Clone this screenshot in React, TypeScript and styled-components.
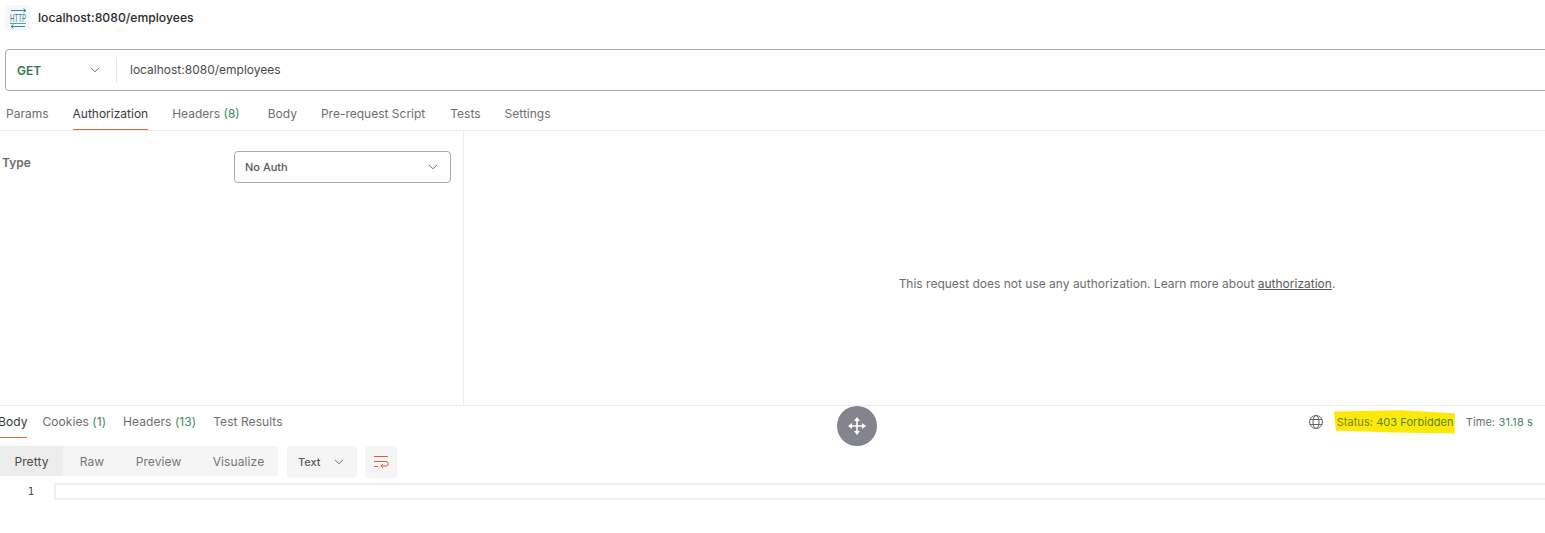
import React from "react";
import styled, { createGlobalStyle } from "styled-components";

const Global = createGlobalStyle`
  html, body { margin: 0; padding: 0; background: #fff; overflow: hidden; }
  body { font-family: Inter, "Liberation Sans", sans-serif; }
`;

const Page = styled.div`
  position: relative;
  width: 1545px;
  height: 533px;
  overflow: hidden;
  background: #fff;
  color: #6b6b6b;
  font-size: 12px;
`;

const TitleBar = styled.header`
  display: flex;
  align-items: center;
  gap: 8px;
  height: 36px;
  padding-left: 5px;
  box-sizing: border-box;
`;

const IconTile = styled.div`
  width: 25px;
  height: 26px;
  border-radius: 4px;
  background: #f5f7f8;
  display: flex;
  align-items: center;
  justify-content: center;
`;

const RequestName = styled.span`
  padding-bottom: 2px;
  font-size: 12.2px;
  font-weight: 500;
  color: #2b2b2b;
`;

const UrlBar = styled.div`
  display: flex;
  align-items: center;
  height: 42px;
  box-sizing: border-box;
  margin: 13px -20px 0 5px;
  border: 1px solid #a8a8a8;
  border-radius: 4px;
`;

const MethodSelect = styled.div`
  display: flex;
  align-items: center;
  justify-content: space-between;
  width: 111px;
  height: 26px;
  box-sizing: border-box;
  padding: 0 16px 0 11px;
  border-right: 1px solid #e6e6e6;
  font-size: 12px;
  font-weight: 600;
  color: #2f7a4f;
`;

const UrlText = styled.span`
  margin-left: 13px;
  padding-bottom: 2px;
  font-size: 12px;
  color: #4a4a4a;
`;

const Tabs = styled.nav<{ $gap: number; $left: number; $height: number }>`
  display: flex;
  align-items: stretch;
  gap: ${(p) => p.$gap}px;
  height: ${(p) => p.$height}px;
  padding-left: ${(p) => p.$left}px;
`;

const RequestTabs = styled(Tabs)`
  margin-top: 6px;
  border-bottom: 1px solid #ededed;
`;

const Tab = styled.span<{ $active?: boolean; $lead?: number; $response?: boolean }>`
  display: flex;
  align-items: center;
  height: 100%;
  box-sizing: border-box;
  margin-left: ${(p) => p.$lead ?? 0}px;
  padding-bottom: ${(p) => (p.$response ? 2 : 0)}px;
  font-size: 12px;
  letter-spacing: ${(p) => (p.$response ? 0.06 : 0)}px;
  white-space: pre;
  color: ${(p) => (p.$active ? "#3a3a3a" : "#6e6e6e")};
  box-shadow: ${(p) => (p.$active ? "inset 0 -1px 0 #e0673a" : "none")};
`;

const Count = styled.span`
  color: #3f8a5f;
`;

const AuthPane = styled.section`
  display: flex;
  height: 274px;
  border-bottom: 1px solid #ededed;
`;

const AuthSide = styled.div`
  display: flex;
  justify-content: space-between;
  align-items: flex-start;
  width: 464px;
  box-sizing: border-box;
  padding: 20px 12px 0 2px;
  border-right: 1px solid #ededed;
`;

const FieldLabel = styled.span`
  font-size: 12px;
  font-weight: 600;
  color: #6e6e6e;
  margin-top: 4px;
`;

const AuthSelect = styled.div`
  display: flex;
  align-items: center;
  justify-content: space-between;
  width: 217px;
  height: 32px;
  box-sizing: border-box;
  padding: 0 12px 0 10px;
  border: 1px solid #a8a8a8;
  border-radius: 4px;
  font-size: 11px;
  font-weight: 500;
  color: #5a5a5a;
`;

const AuthInfo = styled.div`
  flex: 1;
  display: flex;
  align-items: center;
  justify-content: center;
  padding: 30px 0 0 225px;
  font-size: 12px;
  color: #6e6e6e;
`;

const DocLink = styled.span`
  text-decoration: underline;
  color: #5a5a5a;
`;

const ResponseHeader = styled.div`
  display: flex;
  align-items: stretch;
  justify-content: space-between;
  height: 32px;
`;

const ResponseMeta = styled.div`
  display: flex;
  align-items: center;
  padding: 0 12px 1px 0;
  font-size: 11px;
  color: #6e6e6e;
`;

const Globe = styled.span`
  display: flex;
  margin-right: 10px;
  color: #666;
`;

const Status = styled.span`
  display: flex;
  align-items: center;
  width: 121px;
  height: 24px;
  margin-right: 11px;
  padding-left: 3px;
  box-sizing: border-box;
  white-space: pre;
  background: #fce80a;
  color: #7d8512;
  letter-spacing: 0.05px;
  clip-path: polygon(0 8%, 55% 3%, 100% 16%, 100% 100%, 50% 96%, 2% 88%);
`;

const StatusValue = styled.span`
  color: #55881c;
`;

const Time = styled.span`
  letter-spacing: 0.12px;
  white-space: pre;
`;

const TimeValue = styled.span`
  color: #3f8a5f;
`;

const ResponseToolbar = styled.div`
  display: flex;
  align-items: flex-start;
  margin-top: 8px;
`;

const ViewGroup = styled.div`
  display: flex;
  align-items: center;
  width: 278px;
  height: 30px;
  background: #f5f5f5;
  border-radius: 0 4px 4px 0;
`;

const ViewOption = styled.span<{ $active?: boolean; $width: number }>`
  display: flex;
  flex-shrink: 0;
  align-items: center;
  justify-content: center;
  width: ${(p) => p.$width}px;
  height: 100%;
  font-size: 12px;
  letter-spacing: 0.1px;
  color: ${(p) => (p.$active ? "#4a4a4a" : "#757575")};
  background: ${(p) => (p.$active ? "#ededed" : "transparent")};
`;

const FormatSelect = styled.div`
  display: flex;
  align-items: center;
  justify-content: space-between;
  width: 70px;
  height: 32px;
  box-sizing: border-box;
  margin-left: 9px;
  padding: 0 13px 0 11px;
  background: #f5f5f5;
  border-radius: 4px;
  font-size: 11px;
  font-weight: 500;
  color: #5a5a5a;
`;

const WrapButton = styled.div`
  display: flex;
  align-items: center;
  justify-content: center;
  width: 32px;
  height: 32px;
  margin-left: 8px;
  background: #f5f5f5;
  border-radius: 4px;
`;

const Editor = styled.div`
  display: flex;
  align-items: center;
  margin-top: 4px;
  height: 18px;
`;

const LineNumber = styled.span`
  width: 34px;
  text-align: right;
  font-family: "DejaVu Sans Mono", "Liberation Mono", monospace;
  font-size: 10.5px;
  color: #3c4a63;
`;

const LineBox = styled.div`
  flex: 1;
  height: 17px;
  box-sizing: border-box;
  margin: 0 -10px 0 20px;
  border: 2px solid #efefef;
`;

const MoveButton = styled.div`
  position: absolute;
  left: 837px;
  top: 406px;
  width: 40px;
  height: 40px;
  border-radius: 50%;
  background: #84848e;
  display: flex;
  align-items: center;
  justify-content: center;
`;

const Chevron = ({ color = "#666" }: { color?: string }) => (
  <svg width="10" height="6" viewBox="0 0 10 6" fill="none">
    <path d="M1 .8 5 4.800 9 .8" stroke={color} strokeWidth="1" />
  </svg>
);

const HttpIcon = () => (
  <svg width="24" height="21" viewBox="-2 0 24 21" fill="none">
    <path d="M3 2.500h15M15.500 .5 18 2.500l-2.500 2" stroke="#2a8aa0" strokeWidth="1" />
    <path d="M2 15.500h16" stroke="#2a8aa0" strokeWidth="0.8" />
    <path d="M3 18.500h14M5.500 16.500 3 18.500l2.500 2" stroke="#2a8aa0" strokeWidth="1" />
    <text
      transform="translate(2 13.500) scale(1 1.400)"
      textLength="16"
      lengthAdjust="spacingAndGlyphs"
      fontFamily="'Liberation Sans', sans-serif"
      fontSize="7.500"
      fill="#2a7f9a"
    >
      HTTP
    </text>
  </svg>
);

const GlobeIcon = () => (
  <svg width="16" height="16" viewBox="0 0 16 16" fill="none" stroke="currentColor" strokeWidth="1">
    <circle cx="8" cy="8" r="6.500" />
    <ellipse cx="8" cy="8" rx="3" ry="6.500" />
    <path d="M2 5.500h12M2 10.500h12" />
  </svg>
);

const WrapIcon = () => (
  <svg width="16" height="14" viewBox="0 0 16 14" fill="none" stroke="#d4623a" strokeWidth="1">
    <path d="M1 1.500h14M1 6.500h12a2 2 0 0 1 0 4.500H8M10 9 7.800 11l2.200 2M1 11.500h4" />
  </svg>
);

const MoveIcon = () => (
  <svg width="20" height="20" viewBox="0 0 20 20" fill="#fff">
    <path d="M9.200 5h1.600v4.200H15V7l4 3-4 3v-2.200h-4.200V15H13l-3 4-3-4h2.200v-4.200H5V13l-4-3 4-3v2.200h4.200z" />
    <path d="M7 5l3-4 3 4z" />
  </svg>
);

export default function App() {
  return (
    <Page>
      <Global />
      <TitleBar>
        <IconTile>
          <HttpIcon />
        </IconTile>
        <RequestName>localhost:8080/employees</RequestName>
      </TitleBar>
      <UrlBar>
        <MethodSelect>
          GET
          <Chevron />
        </MethodSelect>
        <UrlText>localhost:8080/employees</UrlText>
      </UrlBar>
      <RequestTabs $gap={24} $left={6} $height={33}>
        <Tab>Params</Tab>
        <Tab $active>Authorization</Tab>
        <Tab>
          Headers <Count>(8)</Count>
        </Tab>
        <Tab $lead={4}>Body</Tab>
        <Tab>Pre-request Script</Tab>
        <Tab $lead={1}>Tests</Tab>
        <Tab>Settings</Tab>
      </RequestTabs>
      <AuthPane>
        <AuthSide>
          <FieldLabel>Type</FieldLabel>
          <AuthSelect>
            No Auth
            <Chevron />
          </AuthSelect>
        </AuthSide>
        <AuthInfo>
          <span>
            This request does not use any authorization. Learn more about <DocLink>authorization</DocLink>.
          </span>
        </AuthInfo>
      </AuthPane>
      <ResponseHeader>
        <Tabs $gap={16} $left={0} $height={32}>
          <Tab $active $response $lead={-2}>Body</Tab>
          <Tab $response $lead={-1}>
            Cookies <Count>(1)</Count>
          </Tab>
          <Tab $response $lead={1}>
            Headers <Count>(13)</Count>
          </Tab>
          <Tab $response $lead={1}>Test Results</Tab>
        </Tabs>
        <ResponseMeta>
          <Globe>
            <GlobeIcon />
          </Globe>
          <Status>
            Status: <StatusValue>403 Forbidden</StatusValue>
          </Status>
          <Time>
            Time: <TimeValue>31.18 s</TimeValue>
          </Time>
        </ResponseMeta>
      </ResponseHeader>
      <ResponseToolbar>
        <ViewGroup>
          <ViewOption $active $width={63}>Pretty</ViewOption>
          <ViewOption $width={58}>Raw</ViewOption>
          <ViewOption $width={75}>Preview</ViewOption>
          <ViewOption $width={85}>Visualize</ViewOption>
        </ViewGroup>
        <FormatSelect>
          Text
          <Chevron />
        </FormatSelect>
        <WrapButton>
          <WrapIcon />
        </WrapButton>
      </ResponseToolbar>
      <Editor>
        <LineNumber>1</LineNumber>
        <LineBox />
      </Editor>
      <MoveButton>
        <MoveIcon />
      </MoveButton>
    </Page>
  );
}
